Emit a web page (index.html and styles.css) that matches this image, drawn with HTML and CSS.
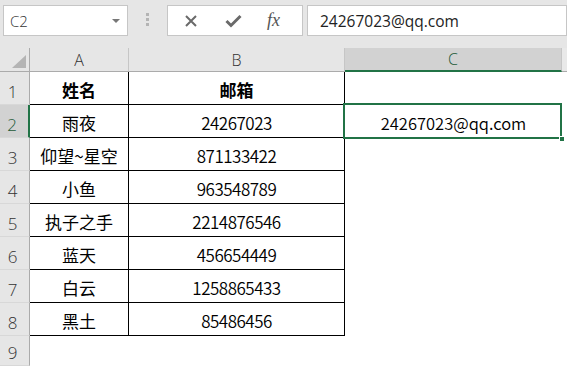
FILE: index.html
```html
<!DOCTYPE html>
<html lang="zh-CN">
<head>
  <meta charset="UTF-8" />
  <title>Sheet1</title>
  <link rel="stylesheet" href="styles.css">
</head>
<body>
  <div class="app">

    <!-- FORMULA BAR -->
    <div class="toolbar">
      <div class="name-box">
        <span>C2</span>
        <span class="caret"></span>
      </div>
      <div class="grip"><i></i><i></i><i></i></div>
      <div class="fn-box">
        <svg class="icon" width="14" height="14" viewBox="0 0 14 14">
          <path d="M2 2 L12 12 M12 2 L2 12" stroke="#6a6a6a" stroke-width="2" fill="none"/>
        </svg>
        <svg class="icon" width="17" height="14" viewBox="0 0 17 14">
          <path d="M1.5 7 L6 11.5 L15.5 2" stroke="#6a6a6a" stroke-width="3" fill="none"/>
        </svg>
        <span class="fx">fx</span>
      </div>
      <div class="formula">24267023@qq.com</div>
    </div>

    <!-- SHEET -->
    <div class="sheet">
      <div class="corner"><span class="tri"></span></div>
      <div class="col-head">A</div>
      <div class="col-head">B</div>
      <div class="col-head active">C</div>
      <div class="col-head rest"></div>

      <div class="row-head">1</div>
      <div class="cell bold">姓名</div>
      <div class="cell bold">邮箱</div>
      <div class="cell free"></div>
      <div class="cell blank"></div>

      <div class="row-head active">2</div>
      <div class="cell">雨夜</div>
      <div class="cell num">24267023</div>
      <div class="cell free selected"><span>24267023@qq.com</span><b class="handle"></b></div>
      <div class="cell blank"></div>

      <div class="row-head">3</div>
      <div class="cell">仰望~星空</div>
      <div class="cell num">871133422</div>
      <div class="cell free"></div>
      <div class="cell blank"></div>

      <div class="row-head">4</div>
      <div class="cell">小鱼</div>
      <div class="cell num">963548789</div>
      <div class="cell free"></div>
      <div class="cell blank"></div>

      <div class="row-head">5</div>
      <div class="cell">执子之手</div>
      <div class="cell num">2214876546</div>
      <div class="cell free"></div>
      <div class="cell blank"></div>

      <div class="row-head">6</div>
      <div class="cell">蓝天</div>
      <div class="cell num">456654449</div>
      <div class="cell free"></div>
      <div class="cell blank"></div>

      <div class="row-head">7</div>
      <div class="cell">白云</div>
      <div class="cell num">1258865433</div>
      <div class="cell free"></div>
      <div class="cell blank"></div>

      <div class="row-head">8</div>
      <div class="cell">黑土</div>
      <div class="cell num">85486456</div>
      <div class="cell free"></div>
      <div class="cell blank"></div>

      <div class="row-head">9</div>
      <div class="cell free"></div>
      <div class="cell free"></div>
      <div class="cell free"></div>
      <div class="cell blank"></div>
    </div>

  </div>
</body>
</html>
```

FILE: styles.css
```css
/* Base */
* { box-sizing: border-box; margin: 0; padding: 0; }
body {
  background: #fff;
  font-family: "Noto Sans CJK SC", "Noto Sans", sans-serif;
  color: #000;
}
.app {
  width: 567px;
  background: #e6e6e6;
}

/* Formula bar */
.toolbar {
  display: flex;
  align-items: flex-start;
  height: 48px;
  padding: 5px 0 0 3px;
}
.name-box,
.fn-box,
.formula {
  height: 31px;
  background: #fff;
  border: 1px solid #c6c6c6;
  display: flex;
  align-items: center;
}
.name-box {
  width: 125px;
  padding: 0 7px 0 6px;
  justify-content: space-between;
  font-family: "Open Sans", "Noto Sans", sans-serif;
  font-weight: 300;
  font-size: 15px;
  color: #333;
}
.caret {
  width: 0;
  height: 0;
  border-left: 4px solid transparent;
  border-right: 4px solid transparent;
  border-top: 4px solid #777;
  margin-top: 1px;
}
.grip {
  width: 39px;
  display: flex;
  flex-direction: column;
  align-items: center;
  gap: 2px;
  padding-top: 8px;
}
.grip i {
  display: block;
  width: 3px;
  height: 3px;
  background: #b4b4b4;
}
.fn-box {
  width: 136px;
  padding-left: 16px;
  gap: 27px;
}
.icon { display: block; }
.fx {
  font-family: "Liberation Serif", serif;
  font-style: italic;
  font-size: 18px;
  color: #555;
  margin-left: -2px;
}
.formula {
  flex: 1;
  margin-left: 4px;
  padding-left: 12px;
  font-family: "Open Sans", "Noto Sans", sans-serif;
  font-size: 15.5px;
  color: #222;
}

/* Grid */
.sheet {
  display: grid;
  grid-template-columns: 30px 99px 216px 217px 5px;
  grid-template-rows: 24px repeat(8, 33px) 30px;
  background: #fff;
}
.corner {
  background: #e6e6e6;
  border-right: 1px solid #ababab;
  border-bottom: 1px solid #ababab;
  position: relative;
}
.tri {
  position: absolute;
  right: 3px;
  bottom: 3px;
  width: 0;
  height: 0;
  border-left: 14px solid transparent;
  border-bottom: 13px solid #b4b4b4;
}
.col-head {
  background: #e6e6e6;
  border-right: 1px solid #c6c6c6;
  border-bottom: 1px solid #ababab;
  display: flex;
  align-items: center;
  justify-content: center;
  font-family: "Open Sans", "Noto Sans", sans-serif;
  font-weight: 300;
  font-size: 16px;
  color: #333;
}
.col-head.active {
  background: #d2d2d2;
  border-bottom: 2px solid #217346;
  color: #1e5a38;
}
.col-head.rest {
  border-right: none;
  background: #e9e9e9;
}
.row-head {
  background: #e6e6e6;
  border-right: 1px solid #ababab;
  border-bottom: 1px solid #d8d8d8;
  display: flex;
  align-items: flex-end;
  justify-content: center;
  padding: 0 4px 1px 0;
  font-family: "Open Sans", "Noto Sans", sans-serif;
  font-weight: 300;
  font-size: 17px;
  color: #333;
}
.row-head.active {
  background: #d2d2d2;
  border-right: 2px solid #217346;
  color: #1e5a38;
}
.cell {
  border-right: 1px solid #000;
  border-bottom: 1px solid #000;
  display: flex;
  align-items: center;
  justify-content: center;
  padding-top: 3px;
  font-size: 17px;
}
.cell.bold { font-weight: 700; }
.cell.num {
  font-size: 17px;
  font-weight: 350;
  letter-spacing: -0.5px;
}
.cell.free,
.cell.blank {
  border: none;
}

/* Selected cell */
.selected {
  position: relative;
  font-size: 16.5px;
  font-weight: 350;
}
.selected::before {
  content: "";
  position: absolute;
  top: -2px;
  left: -2px;
  right: 0;
  bottom: -1px;
  border: 2px solid #217346;
}
.handle {
  position: absolute;
  right: -3px;
  bottom: -4px;
  width: 6px;
  height: 6px;
  background: #217346;
  border: 1px solid #fff;
}
```
